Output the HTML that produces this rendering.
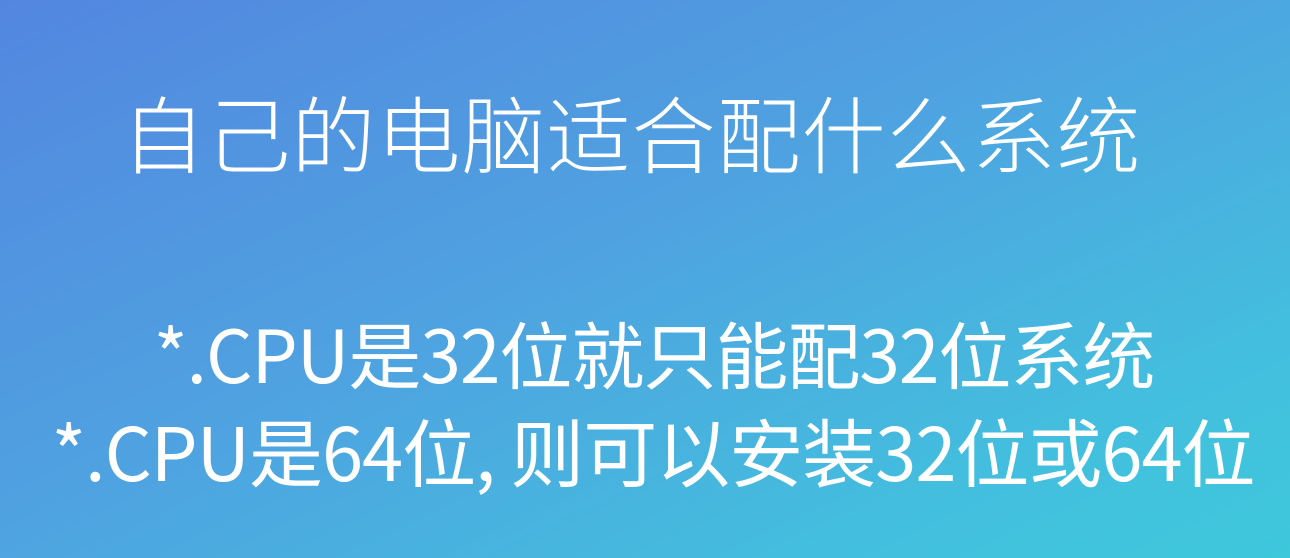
<!DOCTYPE html>
<html><head><meta charset="utf-8"><style>
html,body{margin:0;padding:0}
body{width:1290px;height:558px;overflow:hidden;position:relative;
background:linear-gradient(155deg,#5386e0 0%,#4fa2e0 45%,#43bede 80%,#3ec8dc 100%);
font-family:"Liberation Sans","Noto Sans CJK SC",sans-serif;color:#fff}
.l{position:absolute;white-space:nowrap;text-align:center;font-family:"Noto Sans CJK SC",sans-serif;line-height:1}
</style></head><body>
<div class="l" style="left:0;width:1263px;top:90px;font-size:84px;letter-spacing:1px;font-weight:300">自己的电脑适合配什么系统</div>
<div class="l" style="left:0;width:1308px;top:316px;font-size:73px;letter-spacing:-1px">*.CPU是32位就只能配32位系统</div>
<div class="l" style="left:0;width:1306px;top:413px;font-size:74px;letter-spacing:-1px">*.CPU是64位, 则可以安装32位或64位</div>
</body></html>
